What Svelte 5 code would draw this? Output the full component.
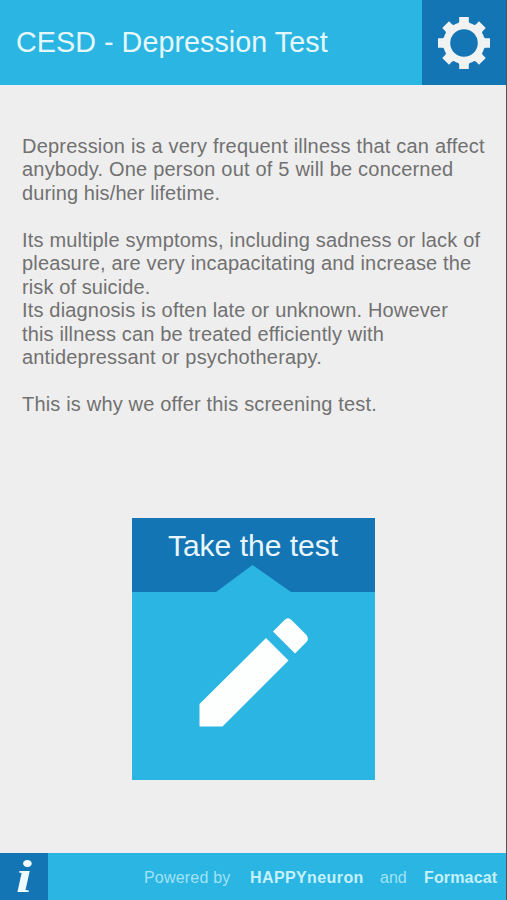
<script>
  const lines = [
    { text: 'Depression is a very frequent illness that can affect', spacing: 0.2 },
    { text: 'anybody. One person out of 5 will be concerned', spacing: 0.2 },
    { text: 'during his/her lifetime.', spacing: 0.1 },
    { text: '', spacing: 0 },
    { text: 'Its multiple symptoms, including sadness or lack of', spacing: 0.18 },
    { text: 'pleasure, are very incapacitating and increase the', spacing: 0.16 },
    { text: 'risk of suicide.', spacing: 0.1 },
    { text: 'Its diagnosis is often late or unknown. However', spacing: 0.17 },
    { text: 'this illness can be treated efficiently with', spacing: 0.15 },
    { text: 'antidepressant or psychotherapy.', spacing: 0.18 },
    { text: '', spacing: 0 },
    { text: 'This is why we offer this screening test.', spacing: 0.18 }
  ];
  const teeth = [0, 45, 90, 135, 180, 225, 270, 315];
</script>

<div class="screen">
  <header>
    <h1>CESD - Depression Test</h1>
    <button class="settings" aria-label="Settings">
      <svg width="54" height="54" viewBox="-27 -27 54 54">
        <circle r="17.3" fill="none" stroke="#f1f3f3" stroke-width="7" />
        {#each teeth as angle}
          <path d="M-6.2-18.500L-4.800-21.500V-26H4.800V-21.500L6.200-18.500Z" fill="#f1f3f3" transform="rotate({angle})" />
        {/each}
      </svg>
    </button>
  </header>

  <main>
    <div class="intro">
      {#each lines as line}
        <div class="line" style="letter-spacing: {line.spacing}px">{line.text}</div>
      {/each}
    </div>

    <button class="card">
      <span class="label">Take the test</span>
      <svg class="pencil" width="243" height="215" viewBox="0 0 243 215">
        <path d="M0 27H84L120.500 0L159 27H243V215H0Z" fill="#2bb5e2" />
        <path d="M67.500 161.500V139L134 73L156.500 95.500L90.500 161.500Z" fill="#fdfefe" />
        <path d="M141 66.500L152.500 55Q156 51.500 159.500 55L174 69.500Q177.500 73.500 174.500 77L163 88.500Z" fill="#fdfefe" />
      </svg>
    </button>
  </main>

  <footer>
    <button class="info" aria-label="Information"><span>i</span></button>
    <p>
      <span class="powered">Powered by</span>
      <b class="happy">HAPPYneuron</b>
      <span class="and">and</span>
      <b class="forma">Formacat</b>
    </p>
  </footer>
</div>

<style>
  .screen {
    box-sizing: border-box;
    width: 507px;
    height: 900px;
    display: flex;
    flex-direction: column;
    overflow: hidden;
    background: #eeeeee;
    border-right: 1px solid #505457;
    font-family: "Liberation Sans", Arial, sans-serif;
  }
  button {
    border: 0;
    padding: 0;
    margin: 0;
    font: inherit;
    color: inherit;
  }
  header {
    display: flex;
    flex: none;
    height: 85px;
    background: #2bb5e2;
  }
  h1 {
    flex: 1;
    margin: 0;
    padding-left: 16px;
    font-size: 28.7px;
    font-weight: 400;
    letter-spacing: 0.06px;
    line-height: 84px;
    white-space: nowrap;
    color: #e4f8fc;
  }
  .settings {
    width: 84px;
    display: flex;
    align-items: center;
    justify-content: center;
    background: #1375b4;
  }
  main {
    flex: 1;
    display: flex;
    flex-direction: column;
    align-items: flex-start;
    padding-top: 49.5px;
  }
  .intro {
    padding-left: 22px;
    font-size: 20px;
    line-height: 23.5px;
    color: #717171;
  }
  .line {
    height: 23.5px;
    white-space: nowrap;
  }
  .card {
    display: flex;
    flex-direction: column;
    width: 243px;
    height: 262px;
    margin: 101.5px 0 0 132px;
    background: #1375b4;
  }
  .label {
    width: 242px;
    height: 47px;
    line-height: 55px;
    font-size: 30px;
    text-align: center;
    color: #e9f6fd;
    white-space: nowrap;
  }
  .pencil {
    display: block;
  }
  footer {
    flex: none;
    display: flex;
    height: 47px;
    background: #2bb5e2;
  }
  .info {
    width: 48px;
    background: #1375b4;
    color: #f0fbff;
  }
  .info span {
    display: block;
    font: italic bold 46px/47px "Liberation Serif", "Times New Roman", serif;
    transform: scaleX(1.25);
  }
  p {
    flex: 1;
    display: flex;
    margin: 0;
    padding-left: 96px;
    font-size: 16px;
    line-height: 49px;
    color: #a2e3f5;
    white-space: nowrap;
  }
  .powered {
    width: 106px;
    letter-spacing: 0.2px;
  }
  b {
    color: #c5f1fb;
  }
  .happy {
    width: 130px;
    letter-spacing: 0.4px;
  }
  .and {
    width: 44px;
  }
  .forma {
    letter-spacing: 0.15px;
  }
</style>
